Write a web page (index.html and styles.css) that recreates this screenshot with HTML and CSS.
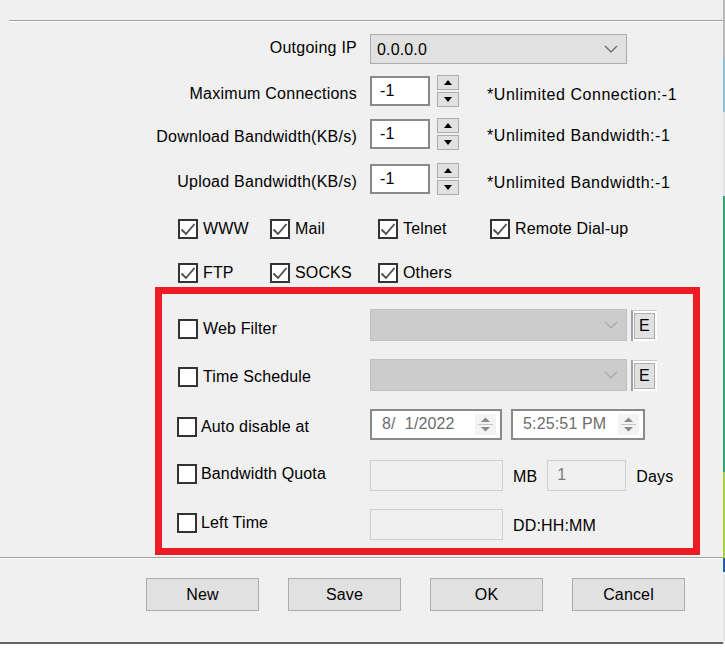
FILE: index.html
```html
<!DOCTYPE html>
<html>
<head>
<meta charset="utf-8">
<link rel="stylesheet" href="styles.css">
</head>
<body>
<div class="screen">
  <div class="panel">
    <div class="rule"></div>

    <div class="fields">
      <div class="frow r-ip">
        <span class="flabel">Outgoing IP</span>
        <div class="combo">
          <span>0.0.0.0</span>
          <svg class="chev" width="14" height="8" viewBox="0 0 14 8"><path d="M1 1 L7 7 L13 1" fill="none" stroke="#606060" stroke-width="1.2"/></svg>
        </div>
      </div>
      <div class="frow r-max">
        <span class="flabel">Maximum Connections</span>
        <div class="num">-1</div>
        <div class="spin">
          <span class="sbtn"><svg width="8" height="5" viewBox="0 0 8 5"><path d="M0 5 L4 0 L8 5Z" fill="#000"/></svg></span>
          <span class="sbtn"><svg width="8" height="5" viewBox="0 0 8 5"><path d="M0 0 L4 5 L8 0Z" fill="#000"/></svg></span>
        </div>
        <span class="note">*Unlimited Connection:-1</span>
      </div>
      <div class="frow r-dl">
        <span class="flabel">Download Bandwidth(KB/s)</span>
        <div class="num">-1</div>
        <div class="spin">
          <span class="sbtn"><svg width="8" height="5" viewBox="0 0 8 5"><path d="M0 5 L4 0 L8 5Z" fill="#000"/></svg></span>
          <span class="sbtn"><svg width="8" height="5" viewBox="0 0 8 5"><path d="M0 0 L4 5 L8 0Z" fill="#000"/></svg></span>
        </div>
        <span class="note">*Unlimited Bandwidth:-1</span>
      </div>
      <div class="frow r-ul">
        <span class="flabel">Upload Bandwidth(KB/s)</span>
        <div class="num">-1</div>
        <div class="spin">
          <span class="sbtn"><svg width="8" height="5" viewBox="0 0 8 5"><path d="M0 5 L4 0 L8 5Z" fill="#000"/></svg></span>
          <span class="sbtn"><svg width="8" height="5" viewBox="0 0 8 5"><path d="M0 0 L4 5 L8 0Z" fill="#000"/></svg></span>
        </div>
        <span class="note">*Unlimited Bandwidth:-1</span>
      </div>
    </div>

    <div class="services">
      <label class="check"><span class="cb"><svg viewBox="0 0 16 16"><path d="M1.5 8.5 L6 13 L14.5 3" fill="none" stroke="#4a4a4a" stroke-width="1.8"/></svg></span>WWW</label>
      <label class="check"><span class="cb"><svg viewBox="0 0 16 16"><path d="M1.5 8.5 L6 13 L14.5 3" fill="none" stroke="#4a4a4a" stroke-width="1.8"/></svg></span>Mail</label>
      <label class="check"><span class="cb"><svg viewBox="0 0 16 16"><path d="M1.5 8.5 L6 13 L14.5 3" fill="none" stroke="#4a4a4a" stroke-width="1.8"/></svg></span>Telnet</label>
      <label class="check"><span class="cb"><svg viewBox="0 0 16 16"><path d="M1.5 8.5 L6 13 L14.5 3" fill="none" stroke="#4a4a4a" stroke-width="1.8"/></svg></span>Remote Dial-up</label>
      <label class="check"><span class="cb"><svg viewBox="0 0 16 16"><path d="M1.5 8.5 L6 13 L14.5 3" fill="none" stroke="#4a4a4a" stroke-width="1.8"/></svg></span>FTP</label>
      <label class="check"><span class="cb"><svg viewBox="0 0 16 16"><path d="M1.5 8.5 L6 13 L14.5 3" fill="none" stroke="#4a4a4a" stroke-width="1.8"/></svg></span>SOCKS</label>
      <label class="check"><span class="cb"><svg viewBox="0 0 16 16"><path d="M1.5 8.5 L6 13 L14.5 3" fill="none" stroke="#4a4a4a" stroke-width="1.8"/></svg></span>Others</label>
    </div>

    <div class="redbox">
      <div class="orow o1">
        <label class="olabel"><span class="cb"></span>Web Filter</label>
        <div class="combo disabled">
          <span></span>
          <svg class="chev" width="14" height="8" viewBox="0 0 14 8"><path d="M1 1 L7 7 L13 1" fill="none" stroke="#a8a8a8" stroke-width="1.2"/></svg>
        </div>
        <span class="ebtn"><span class="einner">E</span></span>
      </div>
      <div class="orow o2">
        <label class="olabel"><span class="cb"></span>Time Schedule</label>
        <div class="combo disabled">
          <span></span>
          <svg class="chev" width="14" height="8" viewBox="0 0 14 8"><path d="M1 1 L7 7 L13 1" fill="none" stroke="#a8a8a8" stroke-width="1.2"/></svg>
        </div>
        <span class="ebtn"><span class="einner">E</span></span>
      </div>
      <div class="orow o3">
        <label class="olabel"><span class="cb"></span>Auto disable at</label>
        <div class="picker date">
          <span class="ptext">8/&nbsp;&nbsp;1/2022</span>
          <span class="pspin"><svg width="21" height="21" viewBox="0 0 21 21"><path d="M6 8 L10.5 3.5 L15 8Z" fill="#8a8a8a"/><line x1="3" y1="10.5" x2="18" y2="10.5" stroke="#c4c4c4"/><path d="M6 13 L10.5 17.5 L15 13Z" fill="#8a8a8a"/></svg></span>
        </div>
        <div class="picker time">
          <span class="ptext">5:25:51 PM</span>
          <span class="pspin"><svg width="21" height="21" viewBox="0 0 21 21"><path d="M6 8 L10.5 3.5 L15 8Z" fill="#8a8a8a"/><line x1="3" y1="10.5" x2="18" y2="10.5" stroke="#c4c4c4"/><path d="M6 13 L10.5 17.5 L15 13Z" fill="#8a8a8a"/></svg></span>
        </div>
      </div>
      <div class="orow o4">
        <label class="olabel"><span class="cb"></span>Bandwidth Quota</label>
        <div class="dbox wide"></div>
        <span class="unit">MB</span>
        <div class="dbox days">1</div>
        <span class="unit">Days</span>
      </div>
      <div class="orow o5">
        <label class="olabel"><span class="cb"></span>Left Time</label>
        <div class="dbox wide"></div>
        <span class="unit">DD:HH:MM</span>
      </div>
    </div>

    <div class="sep"></div>

    <div class="buttons">
      <span class="btn">New</span>
      <span class="btn">Save</span>
      <span class="btn">OK</span>
      <span class="btn">Cancel</span>
    </div>
  </div>
  <div class="strip"></div>
</div>
</body>
</html>
```

FILE: styles.css
```css
html, body {
  margin: 0;
  padding: 0;
}
body {
  font-family: "Liberation Sans", Arial, sans-serif;
  font-size: 16px;
  letter-spacing: 0.15px;
  color: #000;
  background: #fff;
}
.screen {
  display: flex;
  width: 725px;
  height: 654px;
  overflow: hidden;
  background: #fff;
}
.panel {
  width: 723px;
  height: 642px;
  background: #f0f0f0;
  border-bottom: 2px solid #646464;
  display: flex;
  flex-direction: column;
}
.strip {
  width: 2px;
  height: 644px;
  background: linear-gradient(to bottom,
    #b9b9b9 0px, #b9b9b9 58px,
    #8fc1d6 58px, #8fc1d6 112px,
    #e4e4e4 112px, #e4e4e4 196px,
    #33a06e 196px, #33a06e 472px,
    #a9d23e 472px, #a9d23e 558px,
    #2160a8 558px, #2160a8 572px,
    #e6e6e6 572px, #e6e6e6 644px);
}
.rule {
  margin: 20px 0 0 9px;
  border-top: 1px solid #a0a0a0;
  border-bottom: 1px solid #fff;
}

/* upper field rows */
.fields {
  display: flex;
  flex-direction: column;
  padding-top: 12px;
}
.frow {
  display: flex;
  align-items: center;
  height: 30px;
}
.r-max { margin-top: 12px; }
.r-dl { margin-top: 13px; }
.r-ul { margin-top: 15px; }
.flabel {
  flex: none;
  box-sizing: border-box;
  width: 357px;
  margin-right: 13px;
  text-align: right;
  padding-top: 5px;
  letter-spacing: 0.25px;
}
.r-ip .flabel {
  padding-top: 0;
  padding-bottom: 2px;
}
.combo {
  box-sizing: border-box;
  width: 257px;
  height: 30px;
  background: #e1e1e1;
  border: 1px solid #adadad;
  display: flex;
  align-items: center;
  justify-content: space-between;
  padding: 0 8px 0 6px;
}
.combo span {
  padding-top: 2px;
}
.combo.disabled {
  height: 32px;
  background: #cccccc;
  border-color: #bfbfbf;
}
.num {
  box-sizing: border-box;
  width: 60px;
  height: 30px;
  background: #fff;
  border: 2px solid #8a8a8a;
  padding-left: 8px;
  display: flex;
  align-items: center;
}
.spin {
  margin-left: 7px;
  display: flex;
  flex-direction: column;
  gap: 2px;
}
.sbtn {
  box-sizing: border-box;
  width: 22px;
  height: 15px;
  background: #e1e1e1;
  border: 1px solid #adadad;
  display: flex;
  align-items: center;
  justify-content: center;
}
.note {
  margin-left: 28px;
  padding-top: 7px;
  letter-spacing: 0.55px;
}
.r-dl .note {
  padding-top: 4px;
}

/* service checkboxes */
.services {
  display: grid;
  grid-template-columns: 92px 108px 112px auto;
  grid-auto-rows: 20px;
  row-gap: 24px;
  margin: 25px 0 0 178px;
}
.check, .olabel {
  display: flex;
  align-items: center;
  gap: 5px;
}
.cb {
  flex: none;
  box-sizing: border-box;
  width: 20px;
  height: 20px;
  border: 2px solid #333;
  background: #fff;
  display: flex;
}
.cb svg {
  width: 16px;
  height: 16px;
}

/* red highlighted box */
.redbox {
  box-sizing: border-box;
  width: 545px;
  height: 268px;
  margin: 4px 0 0 155px;
  border: 7px solid #ed1c24;
  padding: 15px 0 0 16px;
  display: flex;
  flex-direction: column;
}
.orow {
  display: flex;
  align-items: center;
  height: 32px;
}
.o2 { margin-top: 18px; }
.o3 { margin-top: 17px; }
.o4 { margin-top: 19px; }
.o5 { margin-top: 17px; }
.olabel {
  flex: none;
  box-sizing: border-box;
  width: 192px;
}
.o1 .olabel { padding-top: 8px; }
.o2 .olabel { padding-top: 4px; }
.o3 .olabel { padding-top: 6px; margin-left: -1px; width: 193px; }
.o4 .olabel { padding-bottom: 2px; margin-left: -1px; width: 193px; }
.o5 .olabel { padding-bottom: 3px; margin-left: -1px; width: 193px; }
.o3 .olabel, .o4 .olabel, .o5 .olabel { gap: 4px; }
.ebtn {
  box-sizing: border-box;
  width: 26px;
  height: 31px;
  margin-left: 4px;
  background: #fff;
  border-left: 2px solid #a0a0a0;
  border-top: 1px solid #c8c8c8;
  padding: 2px 2px 2px 1px;
  display: flex;
}
.einner {
  flex: 1;
  box-sizing: border-box;
  background: #e1e1e1;
  border: 1px solid #adadad;
  display: flex;
  align-items: center;
  justify-content: center;
  padding-top: 1px;
}
.picker {
  box-sizing: border-box;
  height: 31px;
  background: #fff;
  border: 2px solid #8a8a8a;
  display: flex;
  align-items: center;
  justify-content: space-between;
  padding: 0 4px 0 10px;
  color: #6d6d6d;
}
.picker.date { width: 132px; }
.picker.time { width: 134px; margin-left: 9px; }
.pspin {
  display: flex;
  background: #f3f3f3;
}
.dbox {
  box-sizing: border-box;
  height: 31px;
  background: #f0f0f0;
  border: 1px solid #cfcfcf;
  color: #7a7a7a;
  display: flex;
  align-items: center;
  padding-left: 9px;
}
.dbox.wide { width: 133px; }
.dbox.days { width: 79px; }
.unit {
  margin: 0 10px;
  padding-top: 3px;
}
.o5 .unit {
  padding-top: 4px;
}

/* bottom */
.sep {
  margin-top: 2px;
  border-top: 1px solid #a0a0a0;
  border-bottom: 1px solid #fff;
}
.buttons {
  display: flex;
  gap: 29px;
  margin: 19px 0 0 146px;
}
.btn {
  box-sizing: border-box;
  width: 113px;
  height: 33px;
  background: #e1e1e1;
  border: 1px solid #adadad;
  display: flex;
  align-items: center;
  justify-content: center;
}
```
